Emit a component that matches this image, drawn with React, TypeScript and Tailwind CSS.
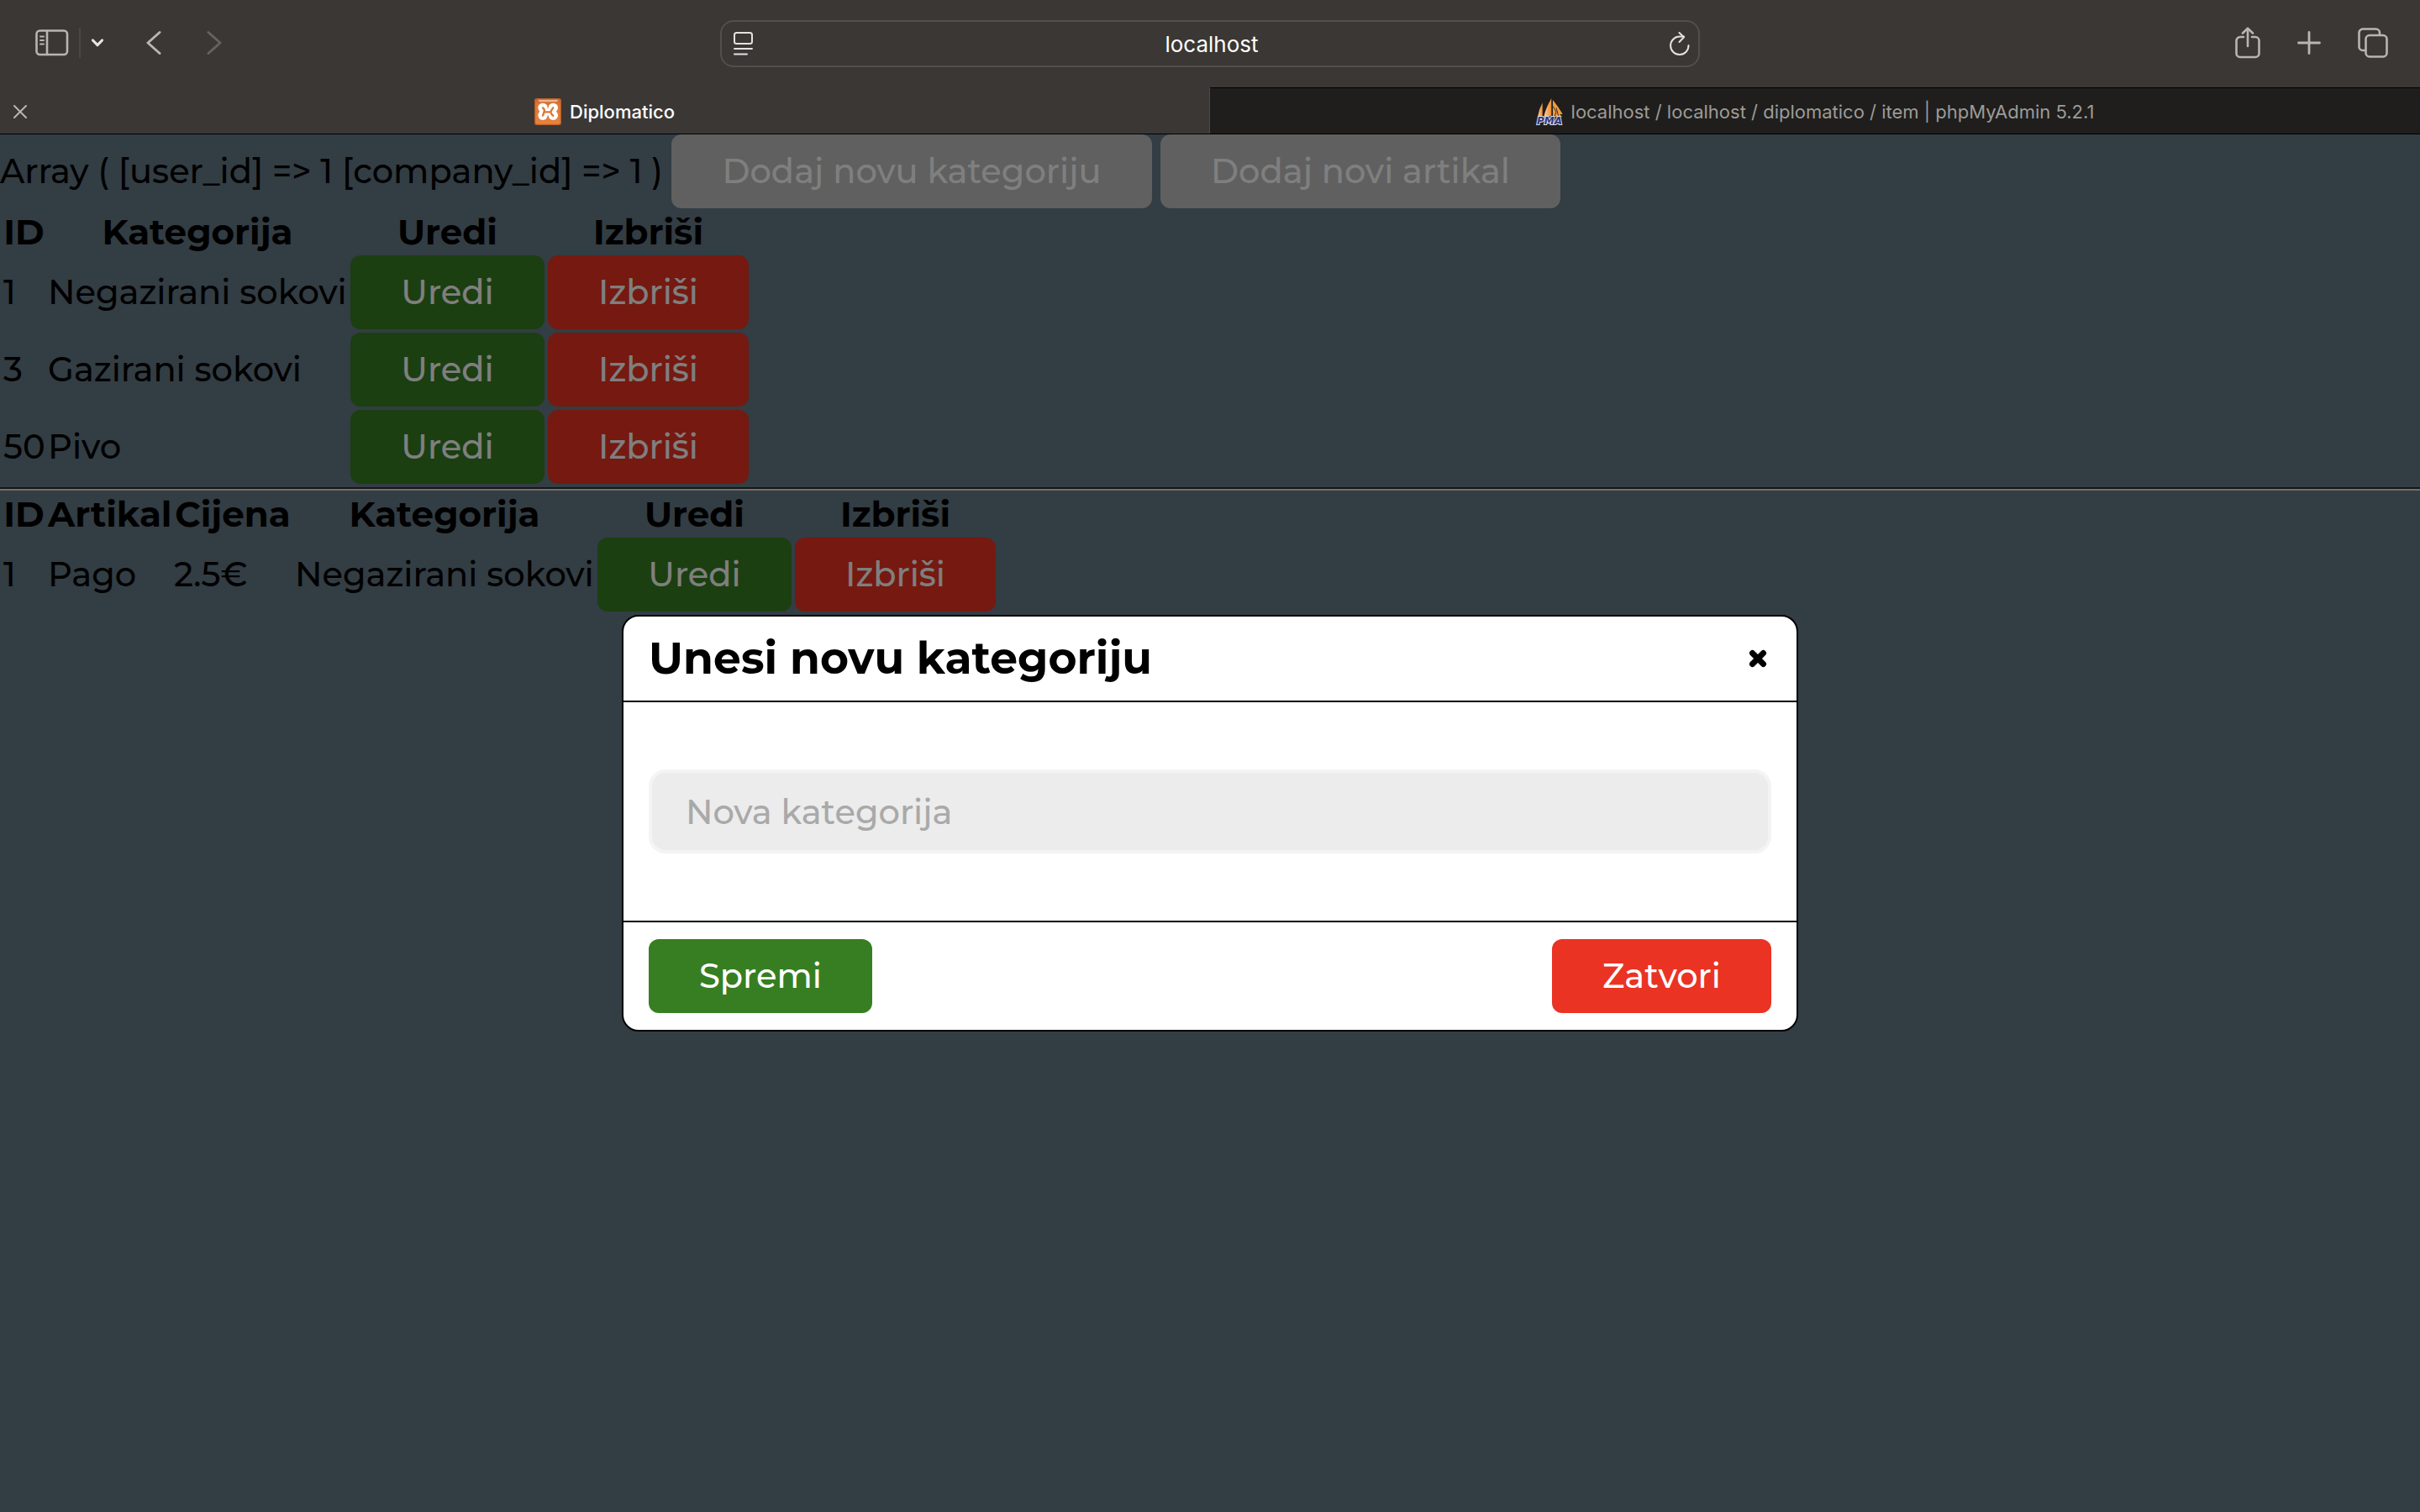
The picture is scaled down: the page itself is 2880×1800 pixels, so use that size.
import React from "react";

const font = "font-['Montserrat','Inter',sans-serif]";

const tone = {
  green: "bg-[#377e22]",
  red: "bg-[#ea3323]",
  gray: "bg-[#c0c0c0]",
};

function Button({
  color,
  className = "",
  children,
}: {
  color: keyof typeof tone;
  className?: string;
  children: React.ReactNode;
}) {
  return (
    <button
      type="button"
      className={`flex h-[88px] items-center justify-center rounded-xl text-white ${tone[color]} ${className}`}
    >
      {children}
    </button>
  );
}

function SidebarIcon() {
  return (
    <svg width="40" height="32" viewBox="0 0 40 32" fill="none" stroke="#bab5b1" strokeWidth="2.6" strokeLinecap="round">
      <rect x="1.5" y="1.5" width="36.500" height="28.5" rx="4" />
      <path d="M14 2v28" />
      <path d="M6 8.500h4M6 13h4M6 17.500h4" strokeWidth="2" />
    </svg>
  );
}

function ShareIcon() {
  return (
    <svg width="30" height="38" viewBox="0 0 30 38" fill="none" stroke="#bab5b1" strokeWidth="2.6" strokeLinecap="round" strokeLinejoin="round">
      <path d="M10 12H6a4.500 4.500 0 0 0-4.500 4.500V31.500A4.500 4.500 0 0 0 6 36H24a4.500 4.500 0 0 0 4.500-4.500V16.500A4.500 4.500 0 0 0 24 12H20" />
      <path d="M15 23V2M9 7.500 15 1.600 21 7.500" />
    </svg>
  );
}

function TabsIcon() {
  return (
    <svg width="36" height="36" viewBox="0 0 36 36" fill="none" stroke="#bab5b1" strokeWidth="2.6" strokeLinecap="round" strokeLinejoin="round">
      <rect x="9.500" y="9" width="25" height="25.500" rx="4.500" />
      <path d="M9 27H6a4.500 4.500 0 0 1-4.500-4.500V6A4.500 4.500 0 0 1 6 1.500H21.500A4.500 4.500 0 0 1 26 6V8.500" />
    </svg>
  );
}

function ReaderIcon() {
  return (
    <svg width="24" height="28" viewBox="0 0 24 28" fill="none" stroke="#e4e2e0" strokeWidth="2" strokeLinecap="round">
      <rect x="1" y="1" width="21" height="13" rx="2.500" />
      <path d="M1 20h21M1 26.500h15" />
    </svg>
  );
}

function ReloadIcon() {
  return (
    <svg width="24" height="28" viewBox="0 0 24 28" fill="none" stroke="#e4e2e0" strokeWidth="2" strokeLinecap="round" strokeLinejoin="round">
      <path d="M22.500 16A10.700 10.700 0 1 1 11.800 5.600H17" />
      <path d="M11.500 1 17 6.300 11.500 12" />
    </svg>
  );
}

function XamppIcon() {
  return (
    <svg width="32" height="32" viewBox="0 0 96 96">
      <defs>
        <linearGradient id="xg" x1="0" y1="0" x2="0" y2="1">
          <stop offset="0" stopColor="#c9652a" />
          <stop offset="0.200" stopColor="#dd7838" />
          <stop offset="1" stopColor="#e8823f" />
        </linearGradient>
      </defs>
      <rect width="96" height="96" rx="8" fill="#b8602c" />
      <rect x="4" y="4" width="88" height="88" rx="6" fill="url(#xg)" />
      <path d="M12 5h74q-4 8-10 8H22q-6 0-10-8Z" fill="#efb48c" />
      <g fill="#fff">
        <circle cx="30" cy="34" r="17" />
        <circle cx="30" cy="61" r="17" />
        <circle cx="67" cy="34" r="17" />
        <circle cx="67" cy="61" r="17" />
        <path d="M22 36H74V60H22Z" />
      </g>
      <g fill="none" stroke="#dd7838" strokeWidth="7" strokeLinecap="round" strokeLinejoin="round">
        <path d="M30 34Q38 40 35 49Q32 56 30 62" />
        <path d="M35 49H58Q62 40 67 34M58 49Q60 58 67 62" />
      </g>
    </svg>
  );
}

function PmaIcon() {
  return (
    <svg width="32" height="32" viewBox="0 0 96 96" className="overflow-visible">
      <defs>
        <linearGradient id="sail" x1="0" y1="0" x2="1" y2="0">
          <stop offset="0" stopColor="#fbd09a" />
          <stop offset="1" stopColor="#ef8a2c" />
        </linearGradient>
      </defs>
      <path d="M23 16V62L6 66Q10 40 23 16Z" fill="url(#sail)" />
      <path d="M55 0V64L28 66Q34 36 55 0Z" fill="url(#sail)" />
      <path d="M60 6Q78 28 95 56L84 58L94 66H60Z" fill="#f29a3e" />
      <path d="M60 28 72 48 66 66M72 34 80 62" stroke="#35302b" strokeWidth="3" fill="none" />
      <text x="48" y="92" textAnchor="middle" fontFamily="DejaVu Sans, sans-serif" fontWeight="700" fontStyle="italic" fontSize="36" fill="#34377c" stroke="#dcdce6" strokeWidth="6" paintOrder="stroke">
        PMA
      </text>
    </svg>
  );
}

function BrowserChrome() {
  return (
    <header className="shrink-0 border-b border-black bg-[#3b3734] font-['Inter',sans-serif]">
      <div className="grid h-[104px] grid-cols-[1fr_1166px_1fr] items-center">
        <div className="flex items-center pb-[2px] pl-[42px]">
          <button type="button" aria-label="Bočna traka">
            <SidebarIcon />
          </button>
          <span className="ml-3 h-9 w-[2px] bg-[#4b4744]" />
          <button type="button" aria-label="Grupe kartica" className="ml-3">
            <svg width="16" height="12" viewBox="0 0 16 12" fill="none" stroke="#e8e4e1" strokeWidth="3.200" strokeLinecap="round" strokeLinejoin="round">
              <path d="M2.500 3 8 8.700 13.500 3" />
            </svg>
          </button>
          <button type="button" aria-label="Natrag" className="ml-[50px]">
            <svg width="18" height="30" viewBox="0 0 18 30" fill="none" stroke="#bab5b1" strokeWidth="3" strokeLinecap="round" strokeLinejoin="round">
              <path d="M16 2.500 2 15 16 27.500" />
            </svg>
          </button>
          <button type="button" aria-label="Naprijed" className="ml-[54px]">
            <svg width="18" height="30" viewBox="0 0 18 30" fill="none" stroke="#65615e" strokeWidth="3" strokeLinecap="round" strokeLinejoin="round">
              <path d="M2 2.500 16 15 2 27.500" />
            </svg>
          </button>
        </div>
        <div className="flex h-14 items-center justify-between rounded-2xl border-2 border-[#534f4b] px-[14px]">
          <button type="button" aria-label="Prikaz stranice">
            <ReaderIcon />
          </button>
          <span className="pt-[2px] text-[26px] leading-8 text-white">localhost</span>
          <button type="button" aria-label="Osvježi" className="-mr-3 pr-2">
            <ReloadIcon />
          </button>
        </div>
        <div className="flex items-center justify-end gap-11 pr-[38px] pb-[2px]">
          <button type="button" aria-label="Dijeli">
            <ShareIcon />
          </button>
          <button type="button" aria-label="Nova kartica">
            <svg width="28" height="28" viewBox="0 0 28 28" stroke="#bab5b1" strokeWidth="2.800" strokeLinecap="round">
              <path d="M14 1.500v25M1.500 14h25" />
            </svg>
          </button>
          <button type="button" aria-label="Pregled kartica">
            <TabsIcon />
          </button>
        </div>
      </div>
      <nav className="grid h-[55px] grid-cols-2 text-[22px] leading-8">
        <div className="relative flex items-center justify-center gap-[10px] border-r border-[#4b4845] pt-[3px] font-medium text-white">
          <button type="button" aria-label="Zatvori karticu" className="absolute left-4">
            <svg width="16" height="16" viewBox="0 0 16 16" stroke="#bab5b1" strokeWidth="2" strokeLinecap="round">
              <path d="M1 1l14 14M15 1L1 15" />
            </svg>
          </button>
          <XamppIcon />
          <a href="#diplomatico">Diplomatico</a>
        </div>
        <div className="flex items-center justify-center gap-[10px] border-t border-black bg-[#1f1e1c] pt-[2px] text-[#9d9b99]">
          <PmaIcon />
          <a href="#phpmyadmin">localhost / localhost / diplomatico / item | phpMyAdmin 5.2.1</a>
        </div>
      </nav>
    </header>
  );
}

const categories = [
  { id: 1, name: "Negazirani sokovi" },
  { id: 3, name: "Gazirani sokovi" },
  { id: 50, name: "Pivo" },
];

const items = [{ id: 1, name: "Pago", price: "2.5€", category: "Negazirani sokovi" }];

const tableClass =
  "table-fixed border-separate border-spacing-1 whitespace-nowrap text-left [&_td]:p-0 [&_th]:h-12 [&_th]:p-0 [&_th]:text-center [&_th]:text-[42px] [&_th]:font-bold";

function RowActions() {
  return (
    <>
      <td>
        <Button color="green" className="w-full">Uredi</Button>
      </td>
      <td>
        <Button color="red" className="w-full">Izbriši</Button>
      </td>
    </>
  );
}

function CategoryTable() {
  return (
    <table className={`w-[895px] ${tableClass}`}>
      <thead>
        <tr>
          <th className="w-[49px]">ID</th>
          <th className="w-[356px]">Kategorija</th>
          <th className="w-[231px]">Uredi</th>
          <th className="w-[239px]">Izbriši</th>
        </tr>
      </thead>
      <tbody>
        {categories.map((c) => (
          <tr key={c.id}>
            <td>{c.id}</td>
            <td>{c.name}</td>
            <RowActions />
          </tr>
        ))}
      </tbody>
    </table>
  );
}

function ItemTable() {
  return (
    <table className={`w-[1189px] ${tableClass}`}>
      <thead>
        <tr>
          <th className="w-[49px]">ID</th>
          <th className="w-[146px]">Artikal</th>
          <th className="w-[140px]">Cijena</th>
          <th className="w-[356px]">Kategorija</th>
          <th className="w-[231px]">Uredi</th>
          <th className="w-[239px]">Izbriši</th>
        </tr>
      </thead>
      <tbody>
        {items.map((i) => (
          <tr key={i.id}>
            <td>{i.id}</td>
            <td>{i.name}</td>
            <td>{i.price}</td>
            <td>{i.category}</td>
            <RowActions />
          </tr>
        ))}
      </tbody>
    </table>
  );
}

function CategoryDialog() {
  return (
    <div className="absolute inset-0 flex items-center justify-center bg-black/50">
      <form
        role="dialog"
        aria-labelledby="dialog-title"
        className="w-full max-w-[1400px] overflow-hidden rounded-[20px] border-2 border-black bg-white"
      >
        <div className="flex h-[102px] items-center justify-between border-b-2 border-black px-[30px]">
          <h1 id="dialog-title" className="text-[52px] leading-[64px] font-bold">
            Unesi novu kategoriju
          </h1>
          <button type="button" aria-label="Zatvori" className="p-1">
            <svg width="24" height="24" viewBox="0 0 24 24" stroke="#000" strokeWidth="7" strokeLinecap="round">
              <path d="M5.500 5.500l13 13M18.500 5.500l-13 13" />
            </svg>
          </button>
        </div>
        <div className="px-[30px] py-20">
          <input
            type="text"
            aria-label="Nova kategorija"
            placeholder="Nova kategorija"
            className="block h-[100px] w-full rounded-[20px] border-4 border-[#f4f4f4] bg-[#ececec] px-10 text-black placeholder:text-[#a9a9a9] placeholder:opacity-100"
          />
        </div>
        <div className="flex items-center justify-between border-t-2 border-black px-[30px] py-5">
          <Button color="green" className="w-[266px]">Spremi</Button>
          <Button color="red" className="w-[261px]">Zatvori</Button>
        </div>
      </form>
    </div>
  );
}

export default function App() {
  return (
    <div className="flex min-h-screen flex-col">
      <BrowserChrome />
      <main className={`relative flex-1 bg-[#667b88] text-[40px] leading-[48px] font-medium text-black ${font}`}>
        <div className="flex items-center gap-[10px] whitespace-nowrap">
          <p className="w-[789px]">Array ( [user_id] =&gt; 1 [company_id] =&gt; 1 )</p>
          <Button color="gray" className="w-[572px]">Dodaj novu kategoriju</Button>
          <Button color="gray" className="w-[476px]">Dodaj novi artikal</Button>
        </div>
        <CategoryTable />
        <hr className="border-t-2 border-b-2 border-t-[#2c2c2c] border-b-[#dedede]" />
        <ItemTable />
        <CategoryDialog />
      </main>
    </div>
  );
}
